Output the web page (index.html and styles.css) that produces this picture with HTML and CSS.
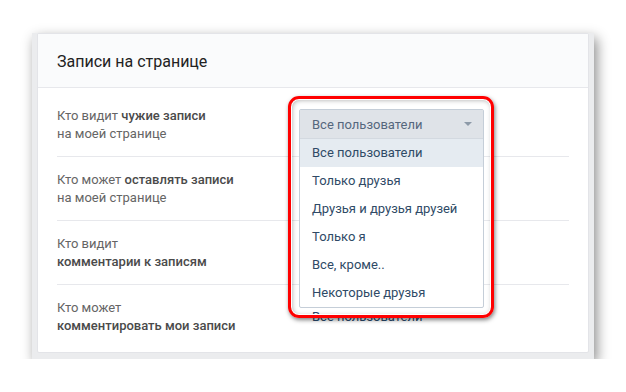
FILE: index.html
```html
<!DOCTYPE html>
<html lang="ru">
<head>
    <meta charset="UTF-8">
    <title>Записи на странице</title>
    <link rel="stylesheet" href="styles.css">
</head>
<body>
    <div class="stage">
        <div class="frame">
            <div class="card">
                <!-- Header -->
                <div class="card-head">Записи на странице</div>

                <!-- Settings rows (values of the first rows sit under the open menu) -->
                <div class="rows">
                    <div class="row">
                        <div class="label">Кто видит <b>чужие записи</b><br>на моей странице</div>
                    </div>
                    <div class="row">
                        <div class="label">Кто может <b>оставлять записи</b><br>на моей странице</div>
                    </div>
                    <div class="row">
                        <div class="label">Кто видит<br><b>комментарии к записям</b></div>
                    </div>
                    <div class="row">
                        <div class="label">Кто может<br><b>комментировать мои записи</b></div>
                        <div class="value">Все пользователи</div>
                    </div>
                </div>
            </div>

            <!-- Open dropdown, marked with a red frame -->
            <div class="highlight">
                <div class="dropdown">
                    <div class="dropdown-head">
                        <span>Все пользователи</span>
                        <span class="arrow"></span>
                    </div>
                    <ul class="dropdown-list">
                        <li class="active">Все пользователи</li>
                        <li>Только друзья</li>
                        <li>Друзья и друзья друзей</li>
                        <li>Только я</li>
                        <li>Все, кроме..</li>
                        <li>Некоторые друзья</li>
                    </ul>
                </div>
            </div>
        </div>
    </div>
</body>
</html>
```

FILE: styles.css
```css
/* General Styles */
body {
    margin: 0;
    background-color: #fff;
    font-family: Roboto, 'Noto Sans', sans-serif;
    color: #000;
}

.stage {
    padding: 33px 0 0 32px;
}

.frame {
    position: relative;
    width: 552px;
    padding: 0 5px 6px;
    background-color: #ebecee;
    box-shadow: 3px 5px 12px rgba(0, 0, 0, 0.45);
}

.card {
    background-color: #fff;
    border: 1px solid #e3e4e8;
    border-radius: 2px;
    height: 318px;
    overflow: hidden;
}

.card-head {
    height: 53px;
    line-height: 55px;
    padding-left: 19px;
    background-color: #fafbfc;
    border-bottom: 1px solid #e7e8ec;
    font-size: 16px;
    color: #222;
}

.rows {
    padding: 5px 19px 0;
}

.row {
    display: grid;
    grid-template-columns: 255px 1fr;
    align-items: center;
    padding: 14px 0 13px;
    border-bottom: 1px solid #e7e8ec;
    font-size: 13px;
    line-height: 18px;
}

.row:last-child {
    border-bottom: none;
}

.label {
    color: #656565;
}

.label b {
    font-weight: 500;
    color: #4a4a4a;
}

.value {
    color: #2a4b6e;
}

/* Highlight frame */
.highlight {
    position: absolute;
    left: 256px;
    top: 63px;
    width: 192px;
    height: 206px;
    padding: 10px 0 0 8px;
    border: 3px solid #f00;
    border-radius: 11px;
    box-shadow: 1px 2px 4px rgba(0, 0, 0, 0.5),
                inset 0 0 0 1px #fff,
                inset 1px 1px 5px rgba(0, 0, 0, 0.35);
}

.dropdown {
    width: 183px;
    border: 1px solid #c5ced8;
    border-radius: 2px;
    background-color: #fff;
    font-size: 13px;
}

.dropdown-head {
    display: flex;
    justify-content: space-between;
    align-items: center;
    height: 28px;
    padding: 0 11px 0 12px;
    background-color: #dfe3e8;
    border-bottom: 1px solid #d3d9e0;
    color: #55677d;
}

.arrow {
    width: 0;
    height: 0;
    border-left: 4px solid transparent;
    border-right: 4px solid transparent;
    border-top: 4px solid #8d9aa8;
}

.dropdown-list {
    list-style: none;
    margin: 0;
    padding: 0;
}

.dropdown-list li {
    height: 28px;
    line-height: 28px;
    padding-left: 12px;
    color: #2f4a66;
}

.dropdown-list li.active {
    background-color: #e5ebf1;
}
```
